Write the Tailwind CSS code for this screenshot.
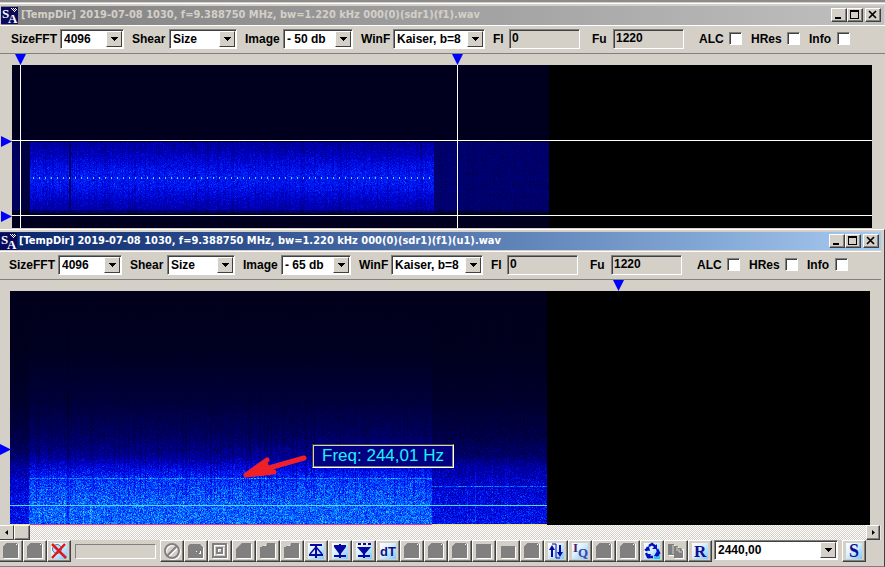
<!DOCTYPE html>
<html lang="en">
<head>
    <meta charset="UTF-8">
    <meta name="viewport" content="width=device-width, initial-scale=1.0">
    <script src="https://cdn.jsdelivr.net/npm/@tailwindcss/browser@4"></script>
    <title>Signal Analyzer</title>
</head>
<body class="min-h-screen bg-[#d4d0c8] font-['Liberation_Sans',Arial,sans-serif] text-xs leading-4 font-bold text-black overflow-x-hidden">
    <!-- Shared icon shapes -->
    <svg class="absolute size-0">
        <defs>
            <linearGradient id="sky" x1="0" y1="0" x2="1" y2="1">
                <stop offset="0" stop-color="#fff"/>
                <stop offset=".45" stop-color="#d8f0ff"/>
                <stop offset="1" stop-color="#78c8ff"/>
            </linearGradient>
            <symbol id="logo" viewBox="0 0 17 17">
                <rect width="17" height="17" fill="#0a0a5c"/>
                <path d="M10 1h1v1h-1zM12 1h1v1h-1zM14 1h1v1h-1zM11 2h1v1h-1zM13 2h1v1h-1zM15 2h1v1h-1zM12 3h1v1h-1zM14 3h1v1h-1zM13 4h1v1h-1z" fill="#fff"/>
                <text x="1" y="11" font-family="Liberation Serif, serif" font-size="13" fill="#fff">S</text>
                <text x="7" y="16" font-family="Liberation Serif, serif" font-size="13" fill="#fff">A</text>
            </symbol>
            <symbol id="down" viewBox="0 0 7 4"><path d="M0 0h7v1H0zM1 1h5v1H1zM2 2h3v1H2zM3 3h1v1H3z"/></symbol>
            <symbol id="blob" viewBox="0 0 18 18">
                <path d="M4 2h13v15H2V5z" fill="#fff"/>
                <path d="M4 1h11v1h1v14H1V4h1V3h1V2h1z" fill="#808080"/>
                <path d="M14 2h1v1h-1z" fill="#fff"/>
            </symbol>
            <symbol id="cut" viewBox="0 0 18 18">
                <path d="M7 2h10v15H2V9z" fill="#fff"/>
                <path d="M7 1h9v15H1V7z" fill="#808080"/>
            </symbol>
            <symbol id="square" viewBox="0 0 18 18">
                <path d="M2 3h15v14H2z" fill="#fff"/>
                <path d="M1 2h15v14H1z" fill="#808080"/>
            </symbol>
            <symbol id="folder" viewBox="0 0 18 18">
                <path d="M8 2h9v15H2V6z" fill="#fff"/>
                <path d="M8 1h8v15H1V5h2V4h4z" fill="#808080"/>
            </symbol>
        </defs>
    </svg>

    <!-- Edge of the window behind -->
    <div class="h-[3px] bg-[#8c8c8c] border-b border-[#d4d0c8]"></div>

    <!-- Upper window -->
    <section class="border-t border-white">
        <header class="mt-[2px] mr-px ml-px flex h-[19px] items-center bg-gradient-to-r from-[#808080] to-[#c0c0c0] pr-[3px] pb-px">
            <svg class="size-[17px]"><use href="#logo"/></svg>
            <h1 class="ml-[3px] flex-1 truncate font-['DejaVu_Sans_Condensed','DejaVu_Sans',sans-serif] text-[11px] text-[#d4d0c8]">[TempDir] 2019-07-08 1030, f=9.388750 MHz, bw=1.220 kHz 000(0)(sdr1)(f1).wav</h1>
            <button aria-label="Minimize" class="h-[14px] w-4 border border-white border-r-[#404040] border-b-[#404040] bg-[#d4d0c8] shadow-[inset_-1px_-1px_0_#808080]"><svg class="h-3 w-[14px]" viewBox="0 0 14 12"><path d="M3 8h6v2H3z"/></svg></button>
            <button aria-label="Maximize" class="h-[14px] w-4 border border-white border-r-[#404040] border-b-[#404040] bg-[#d4d0c8] shadow-[inset_-1px_-1px_0_#808080]"><svg class="h-3 w-[14px]" viewBox="0 0 14 12"><path d="M2 1h9v9H2zM3 3v6h7V3z" fill-rule="evenodd"/></svg></button>
            <button aria-label="Close" class="ml-[2px] h-[14px] w-4 border border-white border-r-[#404040] border-b-[#404040] bg-[#d4d0c8] shadow-[inset_-1px_-1px_0_#808080]"><svg class="h-3 w-[14px]" viewBox="0 0 14 12"><path d="M3 2l7 7M10 2l-7 7" stroke="#000" stroke-width="1.7"/></svg></button>
        </header>

        <div class="flex h-[29px] items-center border-t border-b border-t-white border-b-[#808080] pb-[2px] pl-[11px] whitespace-nowrap">
            <label for="size1" class="w-[49px]">SizeFFT</label>
            <div class="relative mr-2 h-5 w-16">
                <select id="size1" class="size-full appearance-none border border-[#808080] border-r-white border-b-white bg-white pl-[3px] shadow-[inset_1px_1px_0_#404040] outline-none"><option>4096</option></select>
                <span class="pointer-events-none absolute top-[2px] right-[2px] flex h-4 w-4 items-center justify-center border border-white border-r-[#404040] border-b-[#404040] bg-[#d4d0c8]"><svg class="h-1 w-[7px]"><use href="#down"/></svg></span>
            </div>
            <label for="shear1" class="w-[37px]">Shear</label>
            <div class="relative mr-2 h-5 w-[68px]">
                <select id="shear1" class="size-full appearance-none border border-[#808080] border-r-white border-b-white bg-white pl-[3px] shadow-[inset_1px_1px_0_#404040] outline-none"><option>Size</option></select>
                <span class="pointer-events-none absolute top-[2px] right-[2px] flex h-4 w-4 items-center justify-center border border-white border-r-[#404040] border-b-[#404040] bg-[#d4d0c8]"><svg class="h-1 w-[7px]"><use href="#down"/></svg></span>
            </div>
            <label for="image1" class="w-[38px]">Image</label>
            <div class="relative mr-2 h-5 w-[70px]">
                <select id="image1" class="size-full appearance-none border border-[#808080] border-r-white border-b-white bg-white pl-[3px] shadow-[inset_1px_1px_0_#404040] outline-none"><option>- 50 db</option></select>
                <span class="pointer-events-none absolute top-[2px] right-[2px] flex h-4 w-4 items-center justify-center border border-white border-r-[#404040] border-b-[#404040] bg-[#d4d0c8]"><svg class="h-1 w-[7px]"><use href="#down"/></svg></span>
            </div>
            <label for="win1" class="w-8">WinF</label>
            <div class="relative mr-2 h-5 w-[92px]">
                <select id="win1" class="size-full appearance-none border border-[#808080] border-r-white border-b-white bg-white pl-[3px] shadow-[inset_1px_1px_0_#404040] outline-none"><option>Kaiser, b=8</option></select>
                <span class="pointer-events-none absolute top-[2px] right-[2px] flex h-4 w-4 items-center justify-center border border-white border-r-[#404040] border-b-[#404040] bg-[#d4d0c8]"><svg class="h-1 w-[7px]"><use href="#down"/></svg></span>
            </div>
            <label for="fl1" class="w-4">Fl</label>
            <input id="fl1" type="text" value="0" class="mr-3 h-5 w-[71px] border border-[#808080] border-r-white border-b-white bg-[#d4d0c8] pb-[2px] pl-[2px] shadow-[inset_1px_1px_0_#404040] outline-none">
            <label for="fu1" class="w-[21px]">Fu</label>
            <input id="fu1" type="text" value="1220" class="mr-[15px] h-5 w-[71px] border border-[#808080] border-r-white border-b-white bg-[#d4d0c8] pb-[2px] pl-[2px] shadow-[inset_1px_1px_0_#404040] outline-none">
            <label for="alc1" class="w-[30px]">ALC</label>
            <input id="alc1" type="checkbox" class="mr-[9px] size-[13px] appearance-none border border-[#808080] border-r-white border-b-white bg-white shadow-[inset_1px_1px_0_#404040]">
            <label for="hres1" class="w-9">HRes</label>
            <input id="hres1" type="checkbox" class="mr-[9px] size-[13px] appearance-none border border-[#808080] border-r-white border-b-white bg-white shadow-[inset_1px_1px_0_#404040]">
            <label for="info1" class="w-7">Info</label>
            <input id="info1" type="checkbox" class="size-[13px] appearance-none border border-[#808080] border-r-white border-b-white bg-white shadow-[inset_1px_1px_0_#404040]">
        </div>

        <div class="relative pt-[11px] pr-[13px] pl-3">
            <canvas id="upper" class="block h-[163px] w-full bg-black"></canvas>
            <svg class="absolute top-0 left-[15px] h-[11px] w-[11px]" viewBox="0 0 11 11"><path d="M0 0h11L5.500 11z" fill="#00f"/></svg>
            <svg class="absolute top-0 left-[452px] h-[11px] w-[11px]" viewBox="0 0 11 11"><path d="M0 0h11L5.500 11z" fill="#00f"/></svg>
            <svg class="absolute top-[82px] left-px h-[11px] w-[11px]" viewBox="0 0 11 11"><path d="M0 0v11L11 5.500z" fill="#00f"/></svg>
            <svg class="absolute top-[157px] left-px h-[11px] w-[11px]" viewBox="0 0 11 11"><path d="M0 0v11L11 5.500z" fill="#00f"/></svg>
        </div>
    </section>

    <!-- Lower window -->
    <section class="mt-px border-t border-r border-b border-t-white border-r-[#404040] border-b-[#808080] pr-[3px] pb-1">
        <header class="mt-[2px] flex h-[18px] items-center bg-gradient-to-r from-[#0a246a] to-[#a6caf0] pr-[2px]">
            <svg class="size-[17px]"><use href="#logo"/></svg>
            <h1 class="ml-[2px] flex-1 truncate font-['DejaVu_Sans_Condensed','DejaVu_Sans',sans-serif] text-[11px] text-white">[TempDir] 2019-07-08 1030, f=9.388750 MHz, bw=1.220 kHz 000(0)(sdr1)(f1)(u1).wav</h1>
            <button aria-label="Minimize" class="h-[14px] w-4 border border-white border-r-[#404040] border-b-[#404040] bg-[#d4d0c8] shadow-[inset_-1px_-1px_0_#808080]"><svg class="h-3 w-[14px]" viewBox="0 0 14 12"><path d="M3 8h6v2H3z"/></svg></button>
            <button aria-label="Maximize" class="h-[14px] w-4 border border-white border-r-[#404040] border-b-[#404040] bg-[#d4d0c8] shadow-[inset_-1px_-1px_0_#808080]"><svg class="h-3 w-[14px]" viewBox="0 0 14 12"><path d="M2 1h9v9H2zM3 3v6h7V3z" fill-rule="evenodd"/></svg></button>
            <button aria-label="Close" class="ml-[2px] h-[14px] w-4 border border-white border-r-[#404040] border-b-[#404040] bg-[#d4d0c8] shadow-[inset_-1px_-1px_0_#808080]"><svg class="h-3 w-[14px]" viewBox="0 0 14 12"><path d="M3 2l7 7M10 2l-7 7" stroke="#000" stroke-width="1.7"/></svg></button>
        </header>

        <div class="mt-px flex h-[29px] items-center border-t border-b border-t-white border-b-[#808080] pb-[2px] pl-[9px] whitespace-nowrap">
            <label for="size2" class="w-[49px]">SizeFFT</label>
            <div class="relative mr-2 h-5 w-16">
                <select id="size2" class="size-full appearance-none border border-[#808080] border-r-white border-b-white bg-white pl-[3px] shadow-[inset_1px_1px_0_#404040] outline-none"><option>4096</option></select>
                <span class="pointer-events-none absolute top-[2px] right-[2px] flex h-4 w-4 items-center justify-center border border-white border-r-[#404040] border-b-[#404040] bg-[#d4d0c8]"><svg class="h-1 w-[7px]"><use href="#down"/></svg></span>
            </div>
            <label for="shear2" class="w-[37px]">Shear</label>
            <div class="relative mr-2 h-5 w-[68px]">
                <select id="shear2" class="size-full appearance-none border border-[#808080] border-r-white border-b-white bg-white pl-[3px] shadow-[inset_1px_1px_0_#404040] outline-none"><option>Size</option></select>
                <span class="pointer-events-none absolute top-[2px] right-[2px] flex h-4 w-4 items-center justify-center border border-white border-r-[#404040] border-b-[#404040] bg-[#d4d0c8]"><svg class="h-1 w-[7px]"><use href="#down"/></svg></span>
            </div>
            <label for="image2" class="w-[38px]">Image</label>
            <div class="relative mr-2 h-5 w-[70px]">
                <select id="image2" class="size-full appearance-none border border-[#808080] border-r-white border-b-white bg-white pl-[3px] shadow-[inset_1px_1px_0_#404040] outline-none"><option>- 65 db</option></select>
                <span class="pointer-events-none absolute top-[2px] right-[2px] flex h-4 w-4 items-center justify-center border border-white border-r-[#404040] border-b-[#404040] bg-[#d4d0c8]"><svg class="h-1 w-[7px]"><use href="#down"/></svg></span>
            </div>
            <label for="win2" class="w-8">WinF</label>
            <div class="relative mr-2 h-5 w-[92px]">
                <select id="win2" class="size-full appearance-none border border-[#808080] border-r-white border-b-white bg-white pl-[3px] shadow-[inset_1px_1px_0_#404040] outline-none"><option>Kaiser, b=8</option></select>
                <span class="pointer-events-none absolute top-[2px] right-[2px] flex h-4 w-4 items-center justify-center border border-white border-r-[#404040] border-b-[#404040] bg-[#d4d0c8]"><svg class="h-1 w-[7px]"><use href="#down"/></svg></span>
            </div>
            <label for="fl2" class="w-4">Fl</label>
            <input id="fl2" type="text" value="0" class="mr-3 h-5 w-[71px] border border-[#808080] border-r-white border-b-white bg-[#d4d0c8] pb-[2px] pl-[2px] shadow-[inset_1px_1px_0_#404040] outline-none">
            <label for="fu2" class="w-[21px]">Fu</label>
            <input id="fu2" type="text" value="1220" class="mr-[15px] h-5 w-[71px] border border-[#808080] border-r-white border-b-white bg-[#d4d0c8] pb-[2px] pl-[2px] shadow-[inset_1px_1px_0_#404040] outline-none">
            <label for="alc2" class="w-[30px]">ALC</label>
            <input id="alc2" type="checkbox" class="mr-[9px] size-[13px] appearance-none border border-[#808080] border-r-white border-b-white bg-white shadow-[inset_1px_1px_0_#404040]">
            <label for="hres2" class="w-9">HRes</label>
            <input id="hres2" type="checkbox" class="mr-[9px] size-[13px] appearance-none border border-[#808080] border-r-white border-b-white bg-white shadow-[inset_1px_1px_0_#404040]">
            <label for="info2" class="w-7">Info</label>
            <input id="info2" type="checkbox" class="size-[13px] appearance-none border border-[#808080] border-r-white border-b-white bg-white shadow-[inset_1px_1px_0_#404040]">
        </div>

        <div class="relative pt-[11px] pr-[11px] pl-[10px]">
            <canvas id="lower" class="block h-[234px] w-full bg-black"></canvas>
            <svg class="absolute top-0 left-[613px] h-[11px] w-[11px]" viewBox="0 0 11 11"><path d="M0 0h11L5.500 11z" fill="#00f"/></svg>
            <svg class="absolute top-[164px] left-0 h-[11px] w-[11px]" viewBox="0 0 11 11"><path d="M0 0v11L11 5.500z" fill="#00f"/></svg>
            <!-- Pointer and frequency hint -->
            <svg class="absolute top-[170px] left-[240px] h-8 w-[72px]" viewBox="0 0 72 32"><path d="M64 8L8 24M27 10L6 25L34 22" fill="none" stroke="#f02028" stroke-width="5" stroke-linecap="round" stroke-linejoin="round"/><path d="M7 25l20-14 4 11z" fill="#f02028"/></svg>
            <output class="absolute top-[164px] left-[312px] flex h-6 w-[142px] items-center justify-center border border-[#404040] border-r-white border-b-white bg-[#000080] text-[17px] font-normal text-[#20f0ff] shadow-[inset_1px_1px_0_#d4d0c8,inset_-1px_-1px_0_#808080]">Freq: 244,01 Hz</output>
        </div>

        <div class="flex h-[15px] bg-[#eae8e4]">
            <button aria-label="Scroll left" class="flex w-[14px] items-center justify-center border border-l-0 border-white border-r-[#404040] border-b-[#404040] bg-[#d4d0c8]"><svg class="h-[5px] w-[3px]" viewBox="0 0 3 5"><path d="M3 0v5L0 2.500z"/></svg></button>
            <div class="w-4 border border-white border-r-[#404040] border-b-[#404040] bg-[#d4d0c8] shadow-[inset_-1px_-1px_0_#808080]"></div>
            <div class="flex-1 bg-[repeating-conic-gradient(#fff_0_25%,#d4d0c8_0_50%)] bg-[length:2px_2px]"></div>
            <button aria-label="Scroll right" class="mr-px flex w-[14px] items-center justify-center border border-white border-r-[#404040] border-b-[#404040] bg-[#d4d0c8] shadow-[inset_-1px_-1px_0_#808080]"><svg class="h-[5px] w-[3px]" viewBox="0 0 3 5"><path d="M0 0v5L3 2.500z"/></svg></button>
        </div>

        <div class="flex h-[22px] [&>button]:flex [&>button]:h-[22px] [&>button]:w-6 [&>button]:shrink-0 [&>button]:items-center [&>button]:justify-center [&>button]:border [&>button]:border-white [&>button]:border-r-[#404040] [&>button]:border-b-[#404040] [&>button]:shadow-[inset_-1px_-1px_0_#808080] [&_svg]:size-[18px]">
            <button aria-label="Open" class="-ml-px"><svg><use href="#blob"/></svg></button>
            <button aria-label="Save"><svg><use href="#blob"/></svg></button>
            <button aria-label="Zoom off"><svg viewBox="0 0 18 18"><path d="M1 1h16v16H1z" fill="url(#sky)"/><circle cx="7" cy="7" r="4.500" fill="#b8e4ff" stroke="#5878a0"/><path d="M2 2l14 14M15 2L2 16" stroke="#e01818" stroke-width="2.500"/></svg></button>
            <div class="mt-1 mr-1 ml-1 h-[15px] w-[81px] shrink-0 border border-[#808080] border-r-white border-b-white"></div>
            <button aria-label="Stop"><svg viewBox="0 0 18 18" fill="none"><g stroke="#fff" stroke-width="2"><circle cx="10" cy="10" r="7"/><path d="M5 15L15 5"/></g><g stroke="#808080" stroke-width="2"><circle cx="9" cy="9" r="7"/><path d="M4 14L14 4"/></g></svg></button>
            <button aria-label="Play"><svg viewBox="0 0 18 18"><path d="M4 3h11l2 3v11H2V6z" fill="#fff"/><path d="M3 2h10l3 3v11H1V4z" fill="#808080"/><path d="M9 9h1v1H9zM13 9h1v3h-2v-1h1z" fill="#fff"/></svg></button>
            <button aria-label="Frame"><svg viewBox="0 0 18 18" fill="none"><path d="M3 3h13v13H3zM7 7h5v5H7z" stroke="#fff" stroke-width="2"/><path d="M2 2h13v13H2zM6 6h5v5H6z" stroke="#808080" stroke-width="2"/></svg></button>
            <button aria-label="Slope"><svg><use href="#cut"/></svg></button>
            <button aria-label="Step"><svg><use href="#folder"/></svg></button>
            <button aria-label="Ramp"><svg><use href="#folder"/></svg></button>
            <button aria-label="Upper marker"><svg viewBox="0 0 18 18"><path d="M1 1h16v16H1z" fill="url(#sky)"/><path d="M3 3h12M9 3v13M2 13h14" fill="none" stroke="#0808a0" stroke-width="2"/><path d="M9 5l-6 7M9 5l6 7" fill="none" stroke="#0808a0" stroke-width="1.5"/></svg></button>
            <button aria-label="Lower marker"><svg viewBox="0 0 18 18"><path d="M1 1h16v16H1z" fill="url(#sky)"/><path d="M3 4h12M9 2v14M3 14h12" stroke="#0808a0" stroke-width="2"/><path d="M3 5h12l-6 8z" fill="#0808a0"/></svg></button>
            <button aria-label="Split marker"><svg viewBox="0 0 18 18"><path d="M1 1h16v16H1z" fill="url(#sky)"/><path d="M3 2h3M8 2h3M13 2h3M9 5v11M3 14h12" stroke="#0808a0" stroke-width="2"/><path d="M2 5h14l-7 8z" fill="#0808a0"/></svg></button>
            <button aria-label="Delta time"><svg viewBox="0 0 18 18"><path d="M1 1h16v16H1z" fill="url(#sky)"/><text x="1" y="14" font-size="13" font-weight="700" fill="#101080">dT</text></svg></button>
            <button aria-label="Tool 1"><svg><use href="#blob"/></svg></button>
            <button aria-label="Tool 2"><svg><use href="#blob"/></svg></button>
            <button aria-label="Tool 3"><svg><use href="#blob"/></svg></button>
            <button aria-label="Tool 4"><svg><use href="#square"/></svg></button>
            <button aria-label="Tool 5"><svg viewBox="0 0 18 18"><path d="M3 5h14v12H3z" fill="#fff"/><path d="M2 4h14v12H2z" fill="#808080"/></svg></button>
            <button aria-label="Tool 6"><svg><use href="#blob"/></svg></button>
            <button aria-label="Swap"><svg viewBox="0 0 18 18"><path d="M1 1h16v16H1z" fill="url(#sky)"/><path d="M5 15V6M13 3v9" stroke="#0808a0" stroke-width="2"/><path d="M2 8l3-5 3 5zM10 10l3 5 3-5z" fill="#0808a0"/><path d="M5 2h4v14h4" fill="none" stroke="#0808a0"/></svg></button>
            <button aria-label="IQ"><svg viewBox="0 0 18 18"><path d="M1 1h16v16H1z" fill="url(#sky)"/><text x="2" y="10" font-family="Liberation Serif, serif" font-size="13" font-weight="700" fill="#502070">I</text><text x="7" y="15" font-family="Liberation Serif, serif" font-size="13" font-weight="700" fill="#4040a0">Q</text></svg></button>
            <button aria-label="Tool 7"><svg><use href="#blob"/></svg></button>
            <button aria-label="Tool 8"><svg><use href="#blob"/></svg></button>
            <button aria-label="Cycle"><svg viewBox="0 0 18 18"><path d="M1 1h16v16H1z" fill="url(#sky)"/><path d="M11 13h6v4h-6z" fill="#20c8ff"/><path d="M6 4l3-2 4 3M14 7l2 4-3 3M10 15H5l-2-4M3 9l2-4" fill="none" stroke="#0010c0" stroke-width="2.500"/><path d="M14 2v5H9zM16 14h-5l3-5zM6 17l-3-5h5zM1 8l5-4 1 5z" fill="#0010c0"/></svg></button>
            <button aria-label="Copy"><svg viewBox="0 0 18 18"><path d="M2 3h6v2h4v2h5v10H8v-3H2z" fill="#fff"/><path d="M1 2h6v2h4v2h3l2 3v7H7v-3H1z" fill="#808080"/><path d="M6 3v9M10 5v4M12 7v3h3" fill="none" stroke="#d4d0c8"/></svg></button>
            <button aria-label="Record"><svg viewBox="0 0 18 18"><path d="M1 1h16v16H1z" fill="url(#sky)"/><text x="3" y="15" font-family="Liberation Serif, serif" font-size="17" font-weight="700" fill="#101090">R</text></svg></button>
            <div class="relative ml-[2px] h-5 w-[124px] shrink-0">
                <select aria-label="Sample rate" class="size-full appearance-none border border-[#808080] border-r-white border-b-white bg-white pl-[3px] shadow-[inset_1px_1px_0_#404040] outline-none"><option>2440,00</option></select>
                <span class="pointer-events-none absolute top-[2px] right-[2px] flex h-4 w-4 items-center justify-center border border-white border-r-[#404040] border-b-[#404040] bg-[#d4d0c8]"><svg class="h-1! w-[7px]!"><use href="#down"/></svg></span>
            </div>
            <button aria-label="Spectrum" class="ml-1"><svg viewBox="0 0 18 18"><path d="M1 1h16v16H1z" fill="url(#sky)"/><text x="4" y="15" font-family="Liberation Serif, serif" font-size="18" font-weight="700" fill="#101090">S</text></svg></button>
        </div>
    </section>

    <script>
        // level -> colour stops
        const STOPS = [
            [0, 0, 0, 24], [0.25, 0, 0, 96], [0.5, 0, 0, 200],
            [0.65, 0, 30, 255], [0.8, 0, 120, 255], [1, 70, 220, 255]
        ];
        const MAIN = [[0, 0.01], [60, 0.03], [110, 0.12], [145, 0.25], [165, 0.38], [175, 0.54], [190, 0.69], [205, 0.75], [234, 0.77]];
        const SIDE = [[0, 0.01], [60, 0.02], [110, 0.07], [145, 0.16], [165, 0.27], [175, 0.4], [190, 0.49], [205, 0.55], [234, 0.59]];

        let seed = 7;
        function rnd() {
            seed = (seed * 1664525 + 1013904223) % 4294967296;
            return seed / 4294967296;
        }
        function noise() {
            return rnd() + rnd() + rnd() - 1.5;
        }
        function color(v) {
            v = Math.max(0, Math.min(1, v));
            let i = 1;
            while (i < STOPS.length - 1 && v > STOPS[i][0]) i++;
            let a = STOPS[i - 1], b = STOPS[i];
            let t = (v - a[0]) / (b[0] - a[0]);
            return [1, 2, 3].map(k => a[k] + (b[k] - a[k]) * t);
        }
        function curve(points, y) {
            for (let i = 1; i < points.length; i++) {
                if (y <= points[i][0]) {
                    let [x0, v0] = points[i - 1], [x1, v1] = points[i];
                    return v0 + (v1 - v0) * (y - x0) / (x1 - x0);
                }
            }
            return points[points.length - 1][1];
        }
        function paint(canvas, level) {
            seed = 7;
            canvas.width = canvas.clientWidth;
            canvas.height = canvas.clientHeight;
            let ctx = canvas.getContext('2d');
            let end = Math.min(537, canvas.width);
            let img = ctx.createImageData(end, canvas.height);
            for (let x = 0; x < end; x++) {
                let col = rnd();
                for (let y = 0; y < canvas.height; y++) {
                    let c = color(level(x, y, col));
                    img.data.set([c[0], c[1], c[2], 255], (y * end + x) * 4);
                }
            }
            ctx.putImageData(img, 0, 0);
            return ctx;
        }

        function drawUpper(canvas) {
            let ctx = paint(canvas, (x, y, col) => {
                if (y < 77 || y > 147) return y > 147 && y < 150 ? 0 : 0.02;
                let edge = y > 144 ? 0.12 : 0;
                if (x < 8) return 0.24 + noise() * 0.05 - edge;
                if (x < 18) return 0.14 + noise() * 0.04 - edge;
                if (x >= 422) return 0.26 + noise() * 0.07 + col * 0.03 - edge + (y === 114 || y === 126 ? 0.04 : 0);
                if (x === 57 || x === 58) return 0.25 + noise() * 0.06;
                let d = (y - 113) / 19;
                return 0.37 + 0.25 * Math.exp(-d * d / 2) + noise() * 0.11 - (col > 0.75 ? 0.05 : 0) - edge;
            });
            ctx.fillStyle = '#60d0f0';
            for (let x = 21; x < 422; x += 6) ctx.fillRect(x, 112, 1, 2);
            // cursors
            ctx.fillStyle = '#fff';
            ctx.fillRect(0, 75, canvas.width, 1);
            ctx.fillRect(0, 150, canvas.width, 1);
            ctx.fillRect(8, 0, 1, canvas.height);
            ctx.fillRect(445, 0, 1, canvas.height);
        }

        function drawLower(canvas) {
            let ctx = paint(canvas, (x, y, col) => {
                let main = x >= 19 && x < 422;
                let v = curve(main ? MAIN : SIDE, y);
                let amp = y < 100 ? 0.01 : Math.min(0.17, 0.02 + (y - 100) * 0.0016);
                v += noise() * amp;
                if (main && col > 0.8 && y > 90 && y < 210) v -= Math.min(0.08, (y - 90) * 0.001);
                if (col > 0.96) v += y > 165 ? 0.07 : 0.01;
                if (x === 57 || x === 58) v -= y > 100 ? 0.1 : 0.02;
                if (main && y === 187) v += 0.17;
                if (x >= 422 && y === 195) v += 0.25;
                return v;
            });
            ctx.fillStyle = '#50d8ff';
            ctx.fillRect(0, 214, 537, 1);
            ctx.fillStyle = '#f0e080';
            ctx.fillRect(0, 233, 537, 1);
            ctx.fillStyle = '#d030a0';
            ctx.fillRect(20, 233, 402, 1);
        }

        // redraw whenever the layout gives the canvas a new size
        function watch(id, draw) {
            let canvas = document.getElementById(id);
            new ResizeObserver(() => {
                if (canvas.clientWidth) draw(canvas);
            }).observe(canvas);
        }
        watch('upper', drawUpper);
        watch('lower', drawLower);
    </script>
</body>
</html>
